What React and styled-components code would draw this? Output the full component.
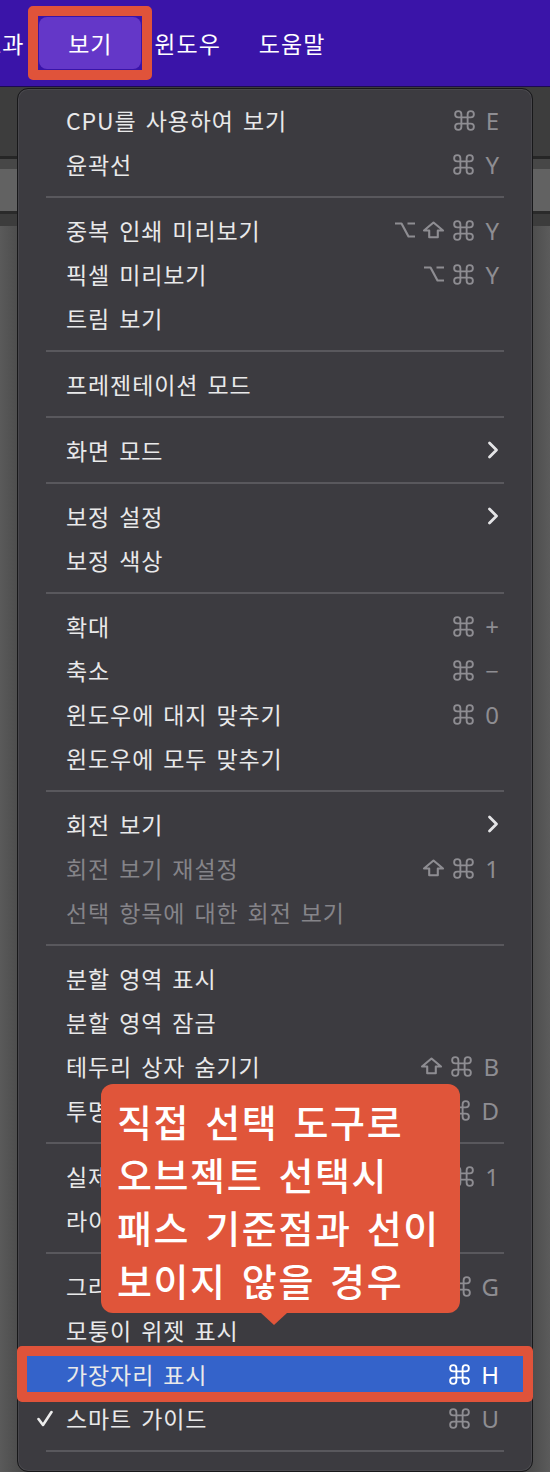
import React from 'react';
import styled, { createGlobalStyle } from 'styled-components';
import { Command } from 'lucide-react';

const GlobalStyle = createGlobalStyle`
  html, body {
    margin: 0;
    padding: 0;
    background: #4b4b4b;
  }
  body {
    font-family: "Noto Sans CJK KR", "Noto Sans", sans-serif;
  }
`;

const Page = styled.div`
  position: relative;
  width: 550px;
  height: 1472px;
  overflow: hidden;
  display: flex;
  flex-direction: column;
  background: #4b4b4b;
`;

const TopBar = styled.div`
  height: 87px;
  flex-shrink: 0;
  box-sizing: border-box;
  display: flex;
  align-items: center;
  background: #3a14a8;
  border-bottom: 1px solid #1c0a52;
  color: #fff;
  font-size: 23px;
  letter-spacing: 1px;
`;

const BarTitle = styled.span`
  margin-left: ${p => p.$ml}px;
  white-space: nowrap;
`;

const ActiveTitle = styled.span`
  position: relative;
  margin-left: 15px;
  width: 102px;
  height: 52px;
  border-radius: 8px;
  background: #6437c8;
  display: flex;
  align-items: center;
  justify-content: center;
`;

const FrameMark = styled.span`
  position: absolute;
  inset: ${p => p.$inset};
  border: 10px solid #e0533a;
  border-radius: 5px;
  pointer-events: none;
`;

const Workspace = styled.div`
  flex: 1;
  display: flex;
  flex-direction: column;
`;

const Band = styled.div`
  height: ${p => p.$h}px;
  flex: ${p => (p.$grow ? 1 : 'none')};
  background: ${p => p.$bg};
`;

const Menu = styled.div`
  position: absolute;
  left: 17px;
  top: 88px;
  width: 516px;
  box-sizing: border-box;
  padding: 9px 5px;
  background: #3c3b40;
  border: 1px solid #18181a;
  border-radius: 11px;
  box-shadow: inset 0 0 0 1px rgba(255, 255, 255, 0.07);
`;

const Item = styled.div`
  position: relative;
  height: 44px;
  display: flex;
  align-items: center;
  padding: 0 28px 0 43px;
  border-radius: 5px;
  background: ${p => (p.$active ? '#3463ca' : 'transparent')};
  color: ${p => (p.$disabled ? '#858489' : '#e9e9ea')};
  font-size: 23px;
  letter-spacing: 0.9px;
  word-spacing: 3px;
  white-space: nowrap;
`;

const Label = styled.span`
  flex: 1;
`;

const Shortcut = styled.span`
  display: flex;
  align-items: center;
  gap: 6px;
  color: ${p => (p.$active ? '#ffffff' : '#8e8d92')};
`;

const KeyLetter = styled.span`
  margin-left: 3px;
  font-family: "Noto Sans", "Liberation Sans", sans-serif;
  font-size: 24px;
  letter-spacing: 0;
`;

const CheckMark = styled.svg`
  position: absolute;
  left: 14px;
  top: 14px;
`;

const Separator = styled.div`
  height: 22px;
  display: flex;
  align-items: center;
  padding: 0 23px;
  &::before {
    content: '';
    flex: 1;
    height: 2px;
    background: #59585d;
  }
`;

const Callout = styled.div`
  position: absolute;
  left: 101px;
  top: 1084px;
  width: 359px;
  height: 229px;
  box-sizing: border-box;
  padding: 10px 0 0 16px;
  border-radius: 12px;
  background: #e0553a;
  color: #fff;
  font-size: 38px;
  font-weight: 500;
  line-height: 53px;
  letter-spacing: 1.6px;
  word-spacing: 5px;
  white-space: nowrap;
  &::after {
    content: '';
    position: absolute;
    left: 160px;
    bottom: -12px;
    border-left: 13px solid transparent;
    border-right: 13px solid transparent;
    border-top: 12px solid #e0553a;
  }
`;

const Chevron = () => (
  <svg width="12" height="18" viewBox="0 0 12 18">
    <polyline points="2.5,2 9.5,9 2.5,16" fill="none" stroke="#e4e4e6" strokeWidth="2.8" strokeLinecap="round" strokeLinejoin="round" />
  </svg>
);

const OptionKey = () => (
  <svg width="22" height="18" viewBox="0 0 22 18">
    <path d="M1 2.5H7.5L14.5 15.5H21M13.5 2.5H21" fill="none" stroke="currentColor" strokeWidth="2.2" strokeLinejoin="round" />
  </svg>
);

const ShiftKey = () => (
  <svg width="23" height="18" viewBox="0 0 23 18">
    <path d="M11.5 1.5L21 9.5H15.8V16.2H7.2V9.5H2Z" fill="none" stroke="currentColor" strokeWidth="2.1" strokeLinejoin="round" />
  </svg>
);

const keyIcons = {
  o: <OptionKey />,
  s: <ShiftKey />,
  c: <Command size={25} strokeWidth={1.8} />,
};

const menu = [
  { label: 'CPU를 사용하여 보기', keys: 'c', letter: 'E' },
  { label: '윤곽선', keys: 'c', letter: 'Y' },
  'sep',
  { label: '중복 인쇄 미리보기', keys: 'osc', letter: 'Y' },
  { label: '픽셀 미리보기', keys: 'oc', letter: 'Y' },
  { label: '트림 보기' },
  'sep',
  { label: '프레젠테이션 모드' },
  'sep',
  { label: '화면 모드', sub: true },
  'sep',
  { label: '보정 설정', sub: true },
  { label: '보정 색상' },
  'sep',
  { label: '확대', keys: 'c', letter: '+' },
  { label: '축소', keys: 'c', letter: '−' },
  { label: '윈도우에 대지 맞추기', keys: 'c', letter: '0' },
  { label: '윈도우에 모두 맞추기' },
  'sep',
  { label: '회전 보기', sub: true },
  { label: '회전 보기 재설정', keys: 'sc', letter: '1', disabled: true },
  { label: '선택 항목에 대한 회전 보기', disabled: true },
  'sep',
  { label: '분할 영역 표시' },
  { label: '분할 영역 잠금' },
  { label: '테두리 상자 숨기기', keys: 'sc', letter: 'B' },
  { label: '투명 격자 표시', keys: 'sc', letter: 'D' },
  'sep',
  { label: '실제 크기', keys: 'c', letter: '1' },
  { label: '라이브 페인트 간격 표시' },
  'sep',
  { label: '그라디언트 주석자 숨기기', keys: 'oc', letter: 'G' },
  { label: '모퉁이 위젯 표시' },
  { label: '가장자리 표시', keys: 'c', letter: 'H', active: true },
  { label: '스마트 가이드', keys: 'c', letter: 'U', checked: true },
  'sep',
];

export default function App() {
  return (
    <>
      <GlobalStyle />
      <Page>
        <TopBar>
          <BarTitle $ml={-20}>효과</BarTitle>
          <ActiveTitle>
            보기
            <FrameMark $inset="-11px" />
          </ActiveTitle>
          <BarTitle $ml={13}>윈도우</BarTitle>
          <BarTitle $ml={38}>도움말</BarTitle>
        </TopBar>

        <Workspace>
          <Band $h={69} $bg="#3d3d3d" />
          <Band $h={3} $bg="#262626" />
          <Band $h={10} $bg="#474747" />
          <Band $h={42} $bg="#626262" />
          <Band $h={3} $bg="#2a2a2a" />
          <Band $h={12} $bg="#3c3c3c" />
          <Band $grow $bg="linear-gradient(90deg, #5a5a5a 0%, #4a4a4a 4%, #4a4a4a 96%, #5b5b5b 100%)" />
        </Workspace>

        <Menu>
          {menu.map((it, i) => {
            if (it === 'sep') return <Separator key={i} />;
            return (
              <Item key={i} $active={it.active} $disabled={it.disabled}>
                {it.checked && (
                  <CheckMark width="16" height="17" viewBox="0 0 16 17">
                    <polyline points="1.5,9 6,15 14.5,2" fill="none" stroke="#ececec" strokeWidth="2.6" strokeLinecap="round" strokeLinejoin="round" />
                  </CheckMark>
                )}
                <Label>{it.label}</Label>
                {it.keys && (
                  <Shortcut $active={it.active}>
                    {[...it.keys].map((k, j) => (
                      <React.Fragment key={j}>{keyIcons[k]}</React.Fragment>
                    ))}
                    <KeyLetter>{it.letter}</KeyLetter>
                  </Shortcut>
                )}
                {it.sub && <Chevron />}
                {it.active && <FrameMark $inset="-6px" />}
              </Item>
            );
          })}
        </Menu>

        <Callout>
          직접 선택 도구로
          <br />
          오브젝트 선택시
          <br />
          패스 기준점과 선이
          <br />
          보이지 않을 경우
        </Callout>
      </Page>
    </>
  );
}
